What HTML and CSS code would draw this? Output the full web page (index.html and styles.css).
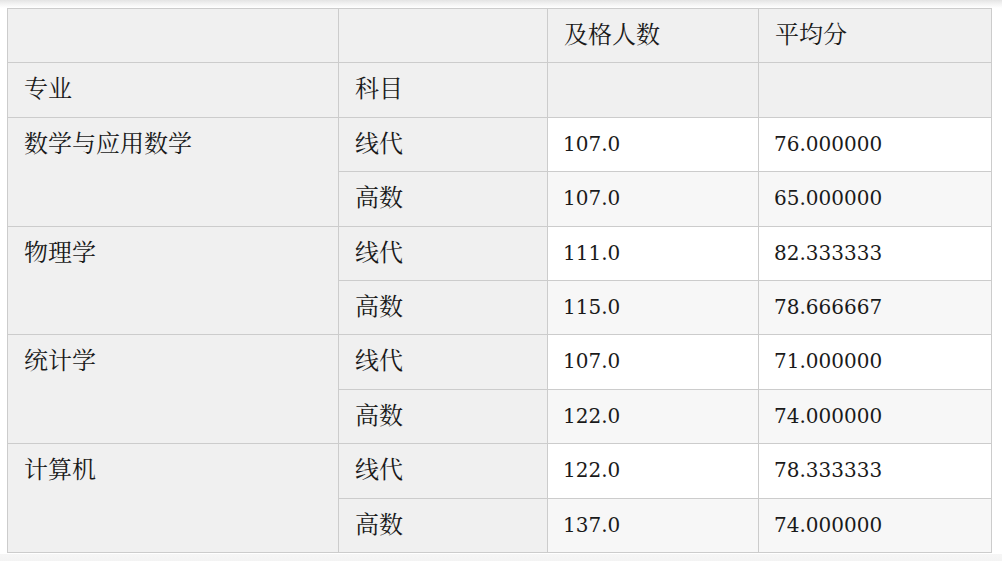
FILE: index.html
```html
<!DOCTYPE html>
<html lang="zh">
<head>
<meta charset="utf-8">
<title>成绩统计</title>
<link rel="stylesheet" href="styles.css">
</head>
<body>
<div class="frame">
  <table class="df">
    <colgroup>
      <col class="c-major">
      <col class="c-subject">
      <col class="c-pass">
      <col class="c-avg">
    </colgroup>
    <thead>
      <tr>
        <th class="blank"></th>
        <th class="blank"></th>
        <th class="col-head">及格人数</th>
        <th class="col-head">平均分</th>
      </tr>
      <tr>
        <th class="idx-name">专业</th>
        <th class="idx-name">科目</th>
        <th class="blank"></th>
        <th class="blank"></th>
      </tr>
    </thead>
    <tbody>
      <tr class="odd">
        <th class="lvl0" rowspan="2">数学与应用数学</th>
        <th class="lvl1">线代</th>
        <td class="num">107.0</td>
        <td class="num">76.000000</td>
      </tr>
      <tr class="even">
        <th class="lvl1">高数</th>
        <td class="num">107.0</td>
        <td class="num">65.000000</td>
      </tr>
      <tr class="odd">
        <th class="lvl0" rowspan="2">物理学</th>
        <th class="lvl1">线代</th>
        <td class="num">111.0</td>
        <td class="num">82.333333</td>
      </tr>
      <tr class="even">
        <th class="lvl1">高数</th>
        <td class="num">115.0</td>
        <td class="num">78.666667</td>
      </tr>
      <tr class="odd">
        <th class="lvl0" rowspan="2">统计学</th>
        <th class="lvl1">线代</th>
        <td class="num">107.0</td>
        <td class="num">71.000000</td>
      </tr>
      <tr class="even">
        <th class="lvl1">高数</th>
        <td class="num">122.0</td>
        <td class="num">74.000000</td>
      </tr>
      <tr class="odd">
        <th class="lvl0" rowspan="2">计算机</th>
        <th class="lvl1">线代</th>
        <td class="num">122.0</td>
        <td class="num">78.333333</td>
      </tr>
      <tr class="even">
        <th class="lvl1">高数</th>
        <td class="num">137.0</td>
        <td class="num">74.000000</td>
      </tr>
    </tbody>
  </table>
</div>
</body>
</html>
```

FILE: styles.css
```css
html, body {
  margin: 0;
  padding: 0;
  background: #ffffff;
}

.frame {
  padding: 8px 11px 9px 7px;
  background:
    linear-gradient(to bottom, #e4e4e4 0, #f3f3f3 4px, #ffffff 8px) top left / 100% 8px no-repeat,
    linear-gradient(to bottom, #f6f6f6 0, #f3f3f3 100%) bottom left / 100% 8px no-repeat,
    #ffffff;
}

.df {
  border-collapse: collapse;
  width: 984px;
  table-layout: fixed;
  color: #1a1a1a;
  font-family: "DejaVu Serif", "Noto Serif CJK SC", "Noto Sans CJK SC", serif;
}

.c-major { width: 331px; }
.c-subject { width: 209px; }
.c-pass { width: 211px; }
.c-avg { width: 233px; }

.df th,
.df td {
  border: 1px solid #cccccc;
  height: 29.4px;
  padding: 12px 16px 12px 16px;
  text-align: left;
  vertical-align: top;
  font-weight: normal;
  line-height: 29.4px;
}

.df th {
  font-size: 24px;
  background: #f0f0f0;
}

.df td.num {
  font-size: 20px;
  padding-left: 15px;
}

.df tr.odd td { background: #ffffff; }
.df tr.even td { background: #f7f7f7; }
```
